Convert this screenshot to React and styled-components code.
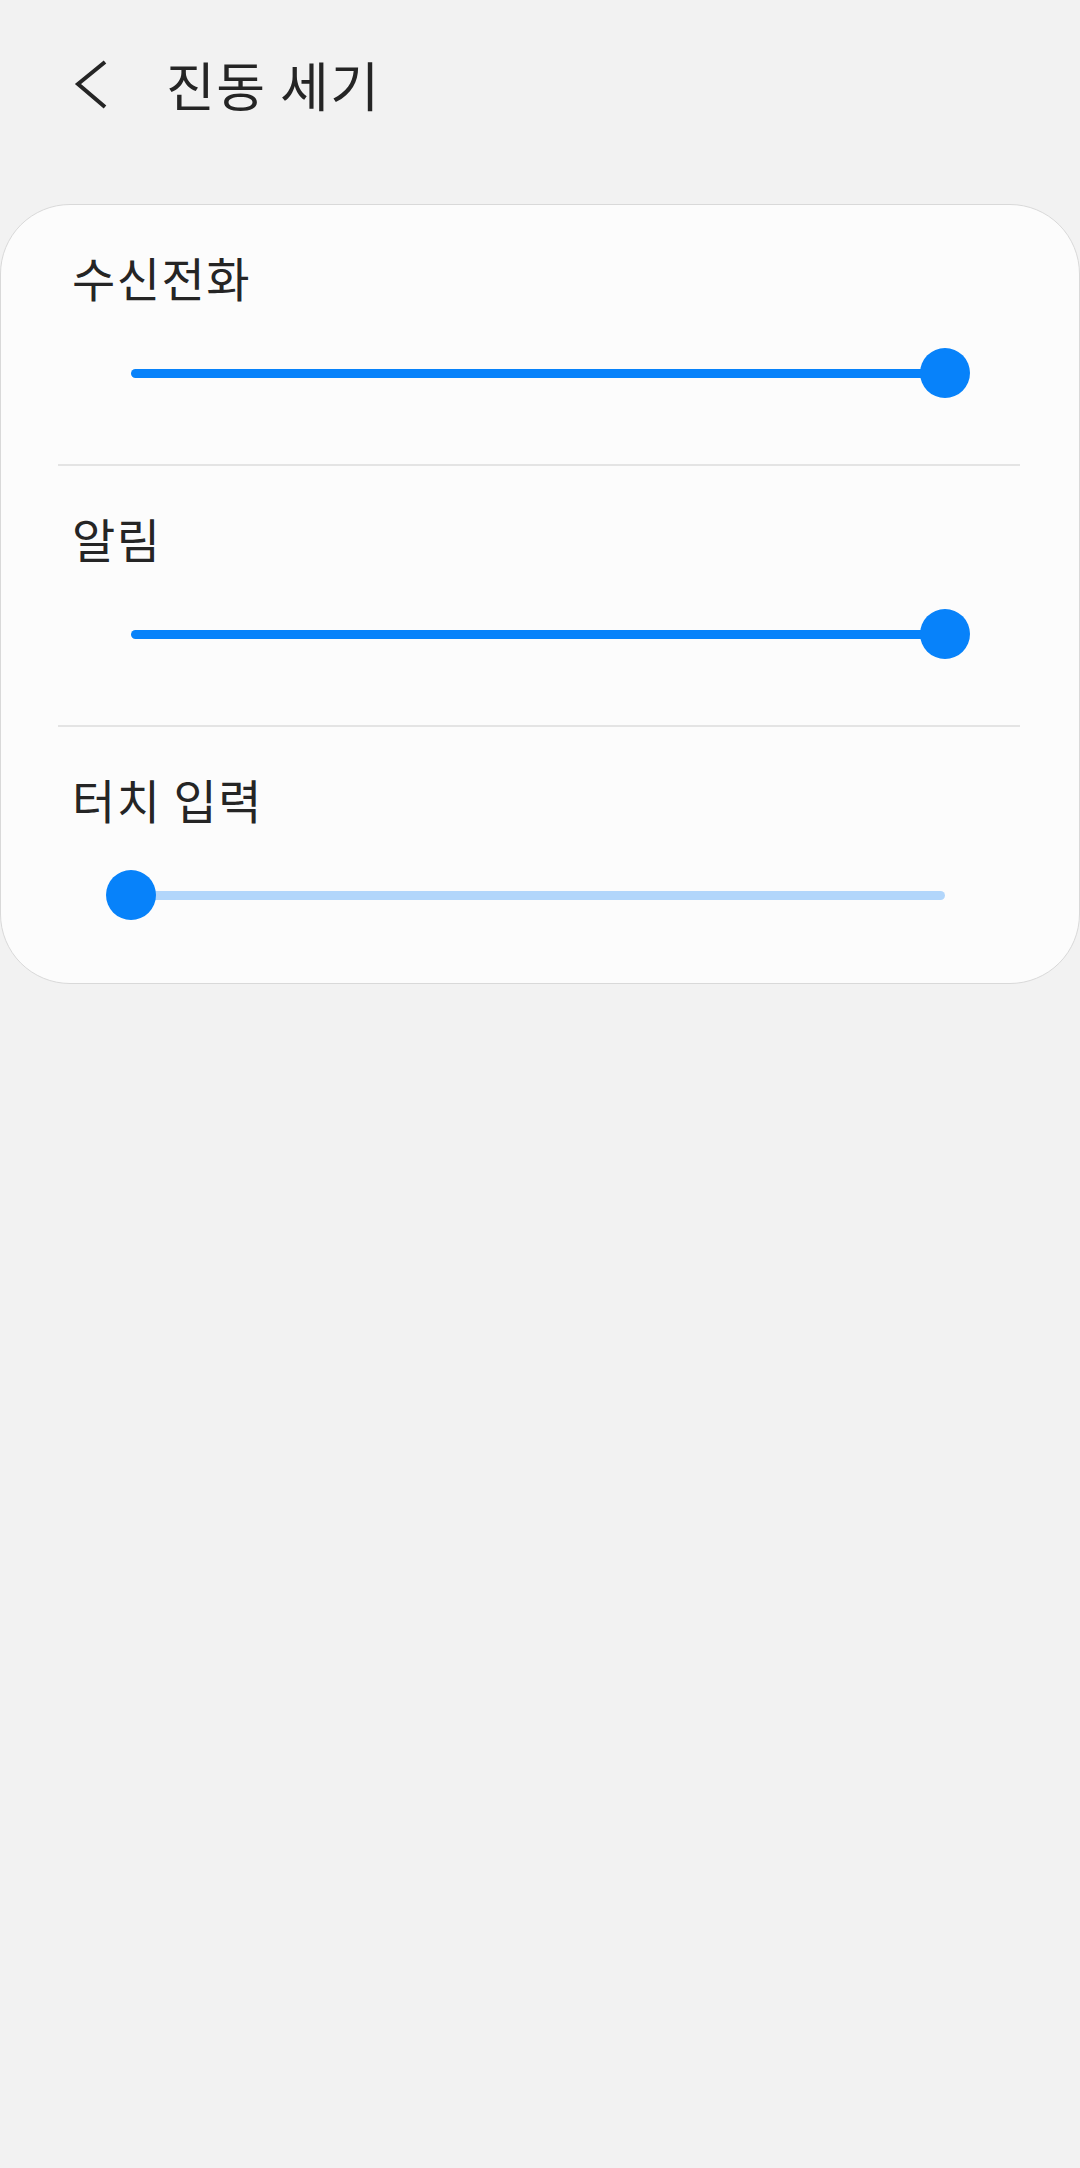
import React from 'react';
import styled, { createGlobalStyle } from 'styled-components';

const GlobalStyle = createGlobalStyle`
  html, body {
    margin: 0;
    padding: 0;
    background: #f2f2f2;
  }

  body {
    font-family: 'Noto Sans CJK KR', 'Noto Sans', sans-serif;
    color: #252525;
  }
`;

const settings = [
  { id: 'call', label: '수신전화', value: 100 },
  { id: 'noti', label: '알림', value: 100 },
  { id: 'touch', label: '터치 입력', value: 0 },
];

function Slider({ value }) {
  return (
    <SliderBox>
      <Track $empty={value === 0}>
        <Fill style={{ width: `${value}%` }} />
      </Track>
      <Thumb style={{ left: `${value}%` }} />
    </SliderBox>
  );
}

export default function App() {
  return (
    <>
      <GlobalStyle />
      <Page>
        <Header>
          <BackButton aria-label="뒤로">
            <svg width="48" height="68" viewBox="0 0 48 68">
              <polyline
                points="39,12 12,34 39,57"
                fill="none"
                stroke="#252525"
                strokeWidth="4"
                strokeLinecap="butt"
                strokeLinejoin="miter"
              />
            </svg>
          </BackButton>
          <Title>진동 세기</Title>
        </Header>

        <Card>
          {settings.map((item, i) => (
            <React.Fragment key={item.id}>
              {i > 0 && <Divider />}
              <Section>
                <Label>{item.label}</Label>
                <Slider value={item.value} />
              </Section>
            </React.Fragment>
          ))}
        </Card>
      </Page>
    </>
  );
}

const Page = styled.div`
  min-height: 2168px;
  background: #f2f2f2;
`;

const Header = styled.header`
  display: flex;
  align-items: center;
  height: 68px;
  padding: 50px 0 0 66px;
  margin-bottom: 86px;
`;

const BackButton = styled.button`
  display: flex;
  width: 48px;
  height: 68px;
  padding: 0;
  border: none;
  background: none;
`;

const Title = styled.h1`
  margin: 0 0 0 52px;
  font-weight: 400;
  font-size: 53px;
  line-height: 68px;
  letter-spacing: 1.5px;
`;

const Card = styled.section`
  border: 1px solid #d9d9d9;
  border-radius: 70px;
  background: #fcfcfc;
`;

const Section = styled.div`
  padding: 44px 0 66px;

  &:last-child {
    padding-bottom: 63px;
  }
`;

const Label = styled.div`
  padding-left: 71px;
  font-weight: 400;
  font-size: 47px;
  line-height: 56px;
  letter-spacing: 1.5px;
`;

const Divider = styled.hr`
  height: 2px;
  margin: 0 59px 0 57px;
  border: none;
  background: #e4e4e4;
`;

const SliderBox = styled.div`
  position: relative;
  display: flex;
  align-items: center;
  height: 50px;
  margin: 43px 134px 0 130px;
`;

const Track = styled.div`
  flex: 1;
  height: 9px;
  border-radius: 5px;
  background: ${({ $empty }) => ($empty ? '#b2d6fb' : '#0782fa')};
  overflow: hidden;
`;

const Fill = styled.div`
  height: 100%;
  background: #0782fa;
`;

const Thumb = styled.div`
  position: absolute;
  top: 0;
  width: 50px;
  height: 50px;
  border-radius: 50%;
  background: #0782fa;
  transform: translateX(-50%);
`;
